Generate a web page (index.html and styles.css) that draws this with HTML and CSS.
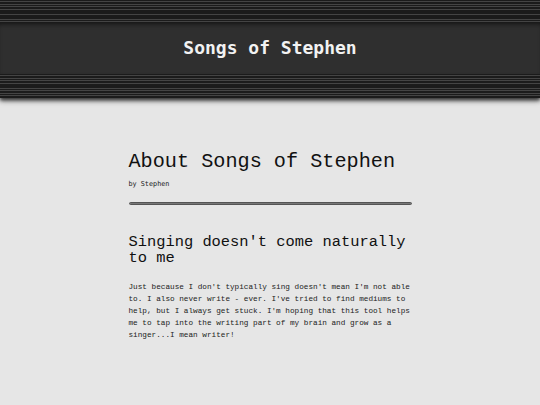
FILE: index.html
```html
<!DOCTYPE html>
<html>
<head>
<meta charset="utf-8">
<link rel="stylesheet" href="styles.css">
</head>
<body>
<header class="site-header">
  <div class="stripes stripes-top"></div>
  <div class="bar"><span class="site-title">Songs of Stephen</span></div>
  <div class="stripes stripes-bottom"></div>
</header>
<main class="content">
  <h1 class="page-title">About Songs of Stephen</h1>
  <div class="byline">by Stephen</div>
  <div class="rule"></div>
  <h2 class="section-title">Singing doesn't come naturally to me</h2>
  <p class="text">Just because I don't typically sing doesn't mean I'm not able to. I also never write - ever. I've tried to find mediums to help, but I always get stuck. I'm hoping that this tool helps me to tap into the writing part of my brain and grow as a singer...I mean writer!</p>
</main>
</body>
</html>
```

FILE: styles.css
```css
html, body {
  margin: 0;
  padding: 0;
}
body {
  background: #e6e6e6;
  width: 540px;
  height: 405px;
  overflow: hidden;
}
.site-header {
  display: flex;
  flex-direction: column;
  box-shadow: 0 3px 5px rgba(0, 0, 0, 0.55);
  position: relative;
}
.stripes {
  background-color: #1b1b1b;
  background-image: repeating-linear-gradient(to bottom, #1b1b1b 0, #1b1b1b 1.5px, #444 1.5px, #444 2.5px);
}
.stripes-top {
  height: 22px;
}
.stripes-bottom {
  height: 24px;
  box-shadow: 0 2px 3px rgba(0,0,0,0.5);
}
.bar {
  height: 52px;
  background: #2f2f2f;
  box-shadow: inset 0 5px 5px -3px rgba(0, 0, 0, 0.6);
  display: flex;
  align-items: center;
  justify-content: center;
}
.site-title {
  font-family: "DejaVu Sans Mono", monospace;
  font-weight: bold;
  font-size: 18px;
  color: #f2f2f2;
  line-height: 20px;
  position: relative;
  top: 0px;
}
.content {
  width: 283px;
  margin: 0 auto;
  padding-top: 52px;
  display: flex;
  flex-direction: column;
}
.page-title {
  margin: 0;
  font-family: "Liberation Mono", monospace;
  font-weight: normal;
  font-size: 20.2px;
  line-height: 24px;
  color: #111;
}
.byline {
  margin-top: 5px;
  font-family: "DejaVu Sans Mono", monospace;
  font-size: 6.8px;
  line-height: 10px;
  color: #222;
}
.rule {
  margin-top: 13px;
  height: 1px;
  background: #777;
  border: 1px solid #555;
  border-radius: 2px;
}
.section-title {
  margin: 29px 0 0;
  font-family: "Liberation Mono", monospace;
  font-weight: normal;
  font-size: 15.4px;
  line-height: 16px;
  color: #111;
}
.text {
  margin: 15px 0 0;
  font-family: "Liberation Mono", monospace;
  font-size: 7.7px;
  line-height: 12px;
  color: #222;
}
```
